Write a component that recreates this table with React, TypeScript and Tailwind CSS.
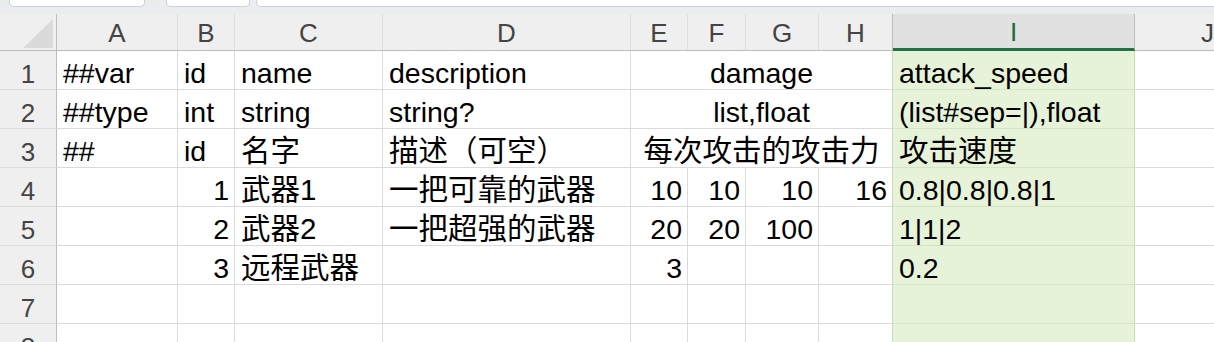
import React from "react";

type Align = "l" | "r" | "c";
type CellData = { t?: string; a?: Align; cjk?: boolean };

// column widths include the 1px right grid line
const GRID = "grid grid-cols-[57px_121px_57px_148px_248px_57px_58px_73px_74px_242px_1fr]";
const LETTERS = ["A", "B", "C", "D", "E", "F", "G", "H", "I", "J"];

type Row = {
  n: number;
  cells: CellData[]; // A..D
  merged?: CellData; // E:H merged
  eh?: CellData[]; // E..H separately
  i?: CellData;
};

const ROWS: Row[] = [
  { n: 1, cells: [{ t: "##var" }, { t: "id" }, { t: "name" }, { t: "description" }], merged: { t: "damage" }, i: { t: "attack_speed" } },
  { n: 2, cells: [{ t: "##type" }, { t: "int" }, { t: "string" }, { t: "string?" }], merged: { t: "list,float" }, i: { t: "(list#sep=|),float" } },
  { n: 3, cells: [{ t: "##" }, { t: "id" }, { t: "名字", cjk: true }, { t: "描述（可空）", cjk: true }], merged: { t: "每次攻击的攻击力", cjk: true }, i: { t: "攻击速度", cjk: true } },
  { n: 4, cells: [{}, { t: "1", a: "r" }, { t: "武器1", cjk: true }, { t: "一把可靠的武器", cjk: true }], eh: [{ t: "10", a: "r" }, { t: "10", a: "r" }, { t: "10", a: "r" }, { t: "16", a: "r" }], i: { t: "0.8|0.8|0.8|1" } },
  { n: 5, cells: [{}, { t: "2", a: "r" }, { t: "武器2", cjk: true }, { t: "一把超强的武器", cjk: true }], eh: [{ t: "20", a: "r" }, { t: "20", a: "r" }, { t: "100", a: "r" }, {}], i: { t: "1|1|2" } },
  { n: 6, cells: [{}, { t: "3", a: "r" }, { t: "远程武器", cjk: true }, {}], eh: [{ t: "3", a: "r" }, {}, {}, {}], i: { t: "0.2" } },
  { n: 7, cells: [{}, {}, {}, {}], eh: [{}, {}, {}, {}], i: {} },
  { n: 8, cells: [{}, {}, {}, {}], eh: [{}, {}, {}, {}], i: {} },
];

function Cell({ d, className = "" }: { d: CellData; className?: string }) {
  const align = d.a === "r" ? "justify-end pr-[5px]" : d.a === "c" ? "justify-center" : "justify-start pl-[6px]";
  return (
    <div
      className={`flex items-end h-[39px] pb-[2px] border-b border-r overflow-hidden whitespace-nowrap leading-none text-black ${align} ${
        d.cjk ? "text-[29.5px]" : "text-[28.5px]"
      } ${className}`}
    >
      {d.t}
    </div>
  );
}

function Toolbar() {
  return (
    <div className="flex h-[14px] bg-[#eaecef]">
      <div className="ml-[9px] w-[136px] h-[7px] bg-white border border-t-0 border-[#cdd0d4] rounded-b-[5px]" />
      <div className="ml-[21px] w-[84px] h-[7px] bg-white border border-t-0 border-[#cdd0d4] rounded-b-[5px]" />
      <div className="ml-[6px] flex-1 h-[7px] bg-white border border-t-0 border-r-0 border-[#cdd0d4] rounded-bl-[5px]" />
    </div>
  );
}

function ColumnHeaders() {
  return (
    <div className={`${GRID} h-[37px] bg-[#efefef] border-b border-[#bdbdbd]`}>
      <div className="relative border-r border-[#bdbdbd]">
        <svg width="57" height="36" className="absolute left-0 top-0">
          <polygon points="23,34 53,5 53,34" fill="#dadada" />
        </svg>
      </div>
      {LETTERS.map((l) =>
        l === "I" ? (
          <div
            key={l}
            className="flex items-end justify-center pb-[3px] bg-[#e1e1e1] border-r border-[#bdbdbd] border-b-[3px] border-b-[#217346] -mb-px text-[26px] leading-none text-[#1d6b40]"
          >
            {l}
          </div>
        ) : (
          <div
            key={l}
            className={`flex items-end pb-[4px] text-[26px] leading-none text-[#444] ${
              l === "J" ? "justify-start pl-[66px]" : "justify-center border-r"
            } ${l === "H" ? "border-[#bdbdbd]" : "border-[#dedede]"}`}
          >
            {l}
          </div>
        )
      )}
    </div>
  );
}

export default function App() {
  return (
    <div className="w-[1214px] h-[342px] overflow-hidden bg-white font-['Liberation_Sans','Noto_Sans_CJK_SC',sans-serif]">
      <Toolbar />
      <ColumnHeaders />
      <div className={GRID}>
        {ROWS.map((r) => (
          <React.Fragment key={r.n}>
            <div className="flex items-end justify-center h-[39px] pb-[2px] bg-[#efefef] border-b border-b-[#dcdcdc] border-r border-r-[#bdbdbd] text-[26px] leading-none text-[#444]">
              {r.n}
            </div>
            {r.cells.map((c, k) => (
              <Cell key={k} d={c} className="border-[#dadada]" />
            ))}
            {r.merged ? (
              <Cell d={{ ...r.merged, a: "c" }} className="col-span-4 border-b-[#dadada] border-r-[#c9dcb5]" />
            ) : (
              r.eh!.map((c, k) => (
                <Cell
                  key={k}
                  d={c}
                  className={k === 3 ? "border-b-[#dadada] border-r-[#c9dcb5]" : "border-[#dadada]"}
                />
              ))
            )}
            <Cell d={r.i ?? {}} className="bg-[#e6f3d9] border-b-[#d3e3c3] border-r-[#c9dcb5]" />
            <Cell d={{}} className="border-[#dadada] border-r-0" />
          </React.Fragment>
        ))}
      </div>
    </div>
  );
}
